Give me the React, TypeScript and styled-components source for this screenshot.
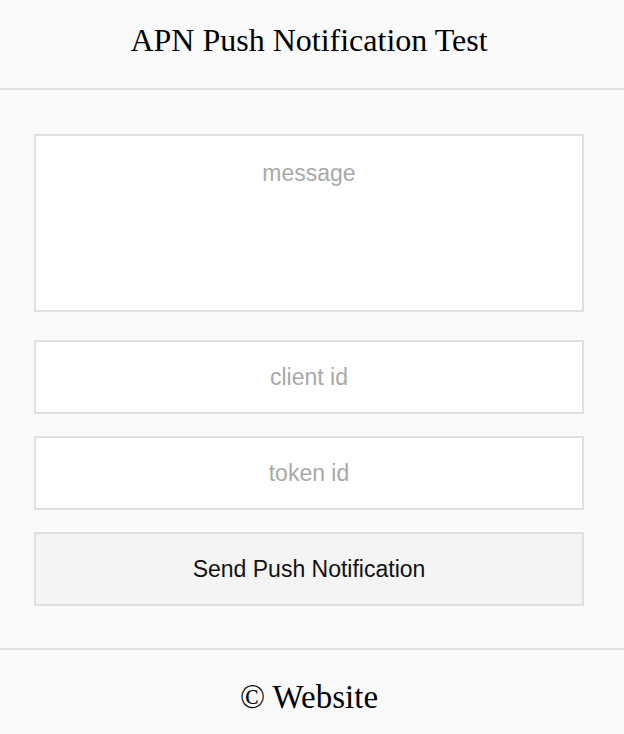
import React from "react";
import styled, { createGlobalStyle } from "styled-components";

const Global = createGlobalStyle`
  html, body { margin: 0; padding: 0; background: #fafafa; }
  body { font-family: "Liberation Serif", "Times New Roman", serif; }
  * { box-sizing: border-box; }
`;

const Page = styled.div`
  display: flex;
  flex-direction: column;
  min-height: 734px;
  background: #fafafa;
`;

const Header = styled.header`
  height: 90px;
  padding: 0 6px 8px 0;
  border-bottom: 2px solid #e0e0e0;
  display: flex;
  align-items: center;
  justify-content: center;
`;

const Title = styled.h1`
  margin: 0;
  font-family: "Liberation Serif", "Times New Roman", serif;
  font-weight: normal;
  font-size: 32px;
  color: #000;
`;

const Main = styled.main`
  height: 560px;
  padding: 44px 40px 0 34px;
  border-bottom: 2px solid #e0e0e0;
  display: flex;
  flex-direction: column;
`;

const Form = styled.form`
  display: flex;
  flex-direction: column;
  gap: 22px;
`;

const fieldBase = `
  width: 100%;
  border: 2px solid #e0e0e0;
  background: #fff;
  font-family: "Liberation Sans", Arial, sans-serif;
  font-size: 23px;
  color: #333;
  text-align: center;
  outline: none;
  &::placeholder { color: #a9a9a9; opacity: 1; }
`;

const Message = styled.textarea`
  ${fieldBase}
  display: block;
  height: 178px;
  padding: 24px 12px;
  resize: none;
  margin-bottom: 6px;
`;

const Field = styled.input`
  ${fieldBase}
  display: block;
  height: 74px;
  padding: 0 12px;
`;

const Button = styled.button`
  display: block;
  width: 100%;
  height: 74px;
  border: 2px solid #e0e0e0;
  background: #f4f4f4;
  font-family: "Liberation Sans", Arial, sans-serif;
  font-size: 23px;
  color: #111;
  cursor: pointer;
`;

const Footer = styled.footer`
  flex: 1;
  display: flex;
  align-items: center;
  justify-content: center;
  padding: 10px 6px 0 0;
  font-family: "Liberation Serif", "Times New Roman", serif;
  font-size: 33px;
  color: #000;
`;

export default function App() {
  return (
    <Page>
      <Global />
      <Header>
        <Title>APN Push Notification Test</Title>
      </Header>
      <Main>
        <Form onSubmit={(e) => e.preventDefault()}>
          <Message placeholder="message" />
          <Field placeholder="client id" />
          <Field placeholder="token id" />
          <Button type="submit">Send Push Notification</Button>
        </Form>
      </Main>
      <Footer>© Website</Footer>
    </Page>
  );
}
